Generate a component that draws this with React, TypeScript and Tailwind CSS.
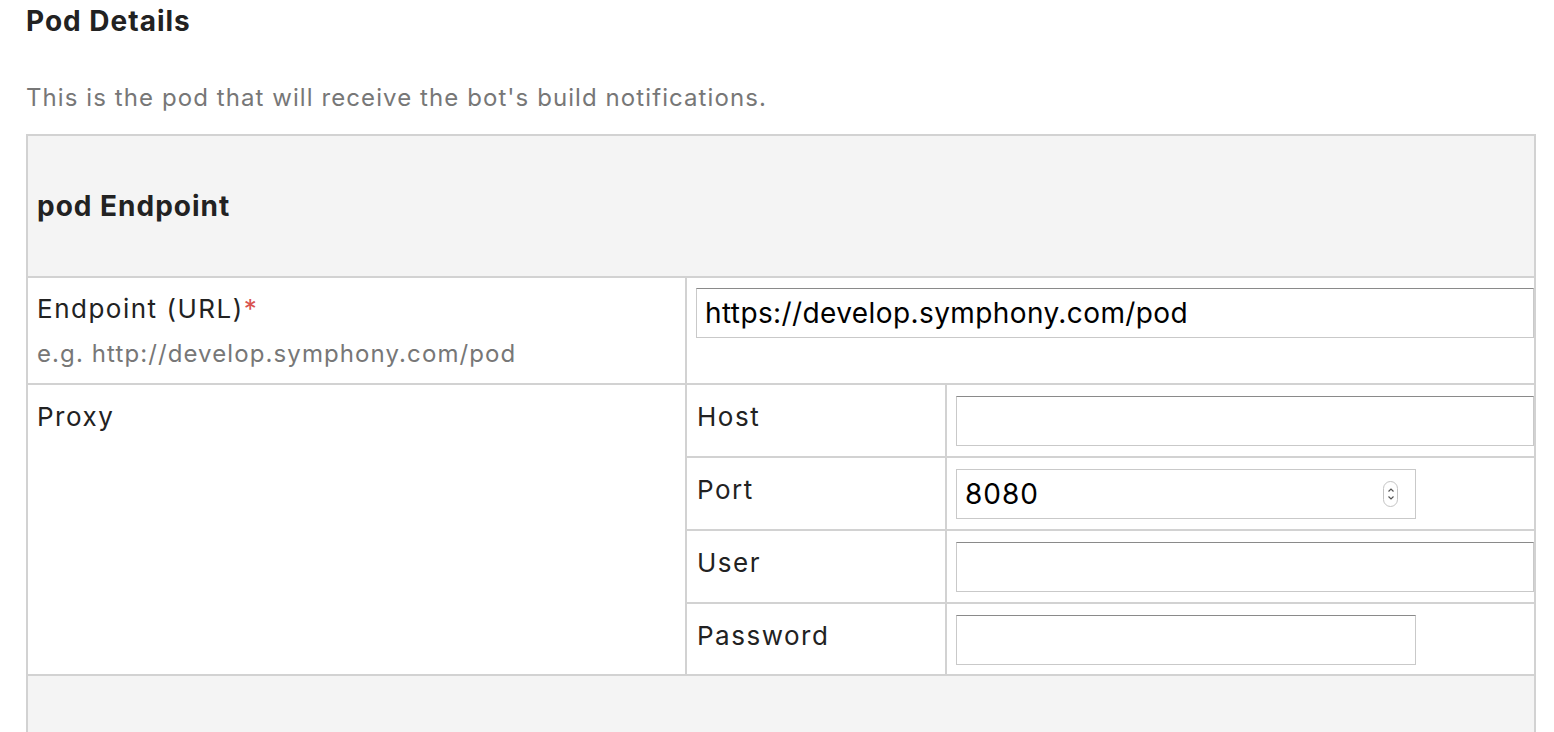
import { useState } from 'react';

// ---------------------------------------------------------------------------
// Small pieces
// ---------------------------------------------------------------------------

const inputCls =
  'h-[50px] border border-[#c9c9c9] border-t-[#8a8a8a] bg-white px-[8px] text-[28px] tracking-[0.4px] text-black outline-none';

function Spinner() {
  return (
    <div className="flex h-[26px] w-[15px] shrink-0 flex-col items-center justify-center rounded-full border border-[#c4c4c4]">
      <svg width="8" height="18" viewBox="0 0 8 18" fill="none" stroke="#555" strokeWidth="1.2">
        <path d="M1.5 6.5 L4 4 L6.5 6.5" />
        <path d="M1.5 11.5 L4 14 L6.5 11.5" />
      </svg>
    </div>
  );
}

function ProxyRow({
  label,
  children,
  last,
}: {
  label: string;
  children: React.ReactNode;
  last?: boolean;
}) {
  return (
    <div className={`flex ${last ? 'h-[70px]' : 'h-[73px] border-b-2 border-[#d2d2d2]'}`}>
      <div className="w-[260px] border-r-2 border-[#d2d2d2] pl-[10px] pt-[12px]">{label}</div>
      <div className="flex-1 pl-[9px] pt-[11px]">{children}</div>
    </div>
  );
}

// ---------------------------------------------------------------------------
// Page
// ---------------------------------------------------------------------------

export default function App() {
  const [endpoint, setEndpoint] = useState('https://develop.symphony.com/pod');
  const [host, setHost] = useState('');
  const [port, setPort] = useState('8080');
  const [user, setUser] = useState('');
  const [password, setPassword] = useState('');

  return (
    <div className="min-h-screen bg-white font-['Inter','Liberation_Sans',sans-serif] text-[#222]">
      <div className="pl-[26px]">
        <h2 className="pt-[4px] text-[28px] font-bold leading-[34px] tracking-[1px]">Pod Details</h2>
        <p className="mt-[44px] text-[24px] leading-[32px] tracking-[1.08px] text-[#777]">
          This is the pod that will receive the bot's build notifications.
        </p>

        <div className="mt-[20px] w-[1510px] border-2 border-[#d2d2d2] text-[26px] tracking-[1.5px]">
          {/* Section header */}
          <div className="flex h-[142px] items-center border-b-2 border-[#d2d2d2] bg-[#f4f4f4] pl-[9px]">
            <span className="text-[28px] font-bold tracking-[1px]">pod Endpoint</span>
          </div>

          {/* Endpoint */}
          <div className="flex h-[107px] border-b-2 border-[#d2d2d2]">
            <div className="w-[659px] border-r-2 border-[#d2d2d2] pl-[9px] pt-[14px]">
              <div className="leading-[34px]">
                Endpoint (URL)<span className="text-[#d9534f]">*</span>
              </div>
              <div className="mt-[13px] text-[24px] leading-[30px] tracking-[1.1px] text-[#777]">
                e.g. http://develop.symphony.com/pod
              </div>
            </div>
            <div className="flex-1 pl-[9px] pt-[10px]">
              <input
                className={`${inputCls} w-full`}
                value={endpoint}
                onChange={(e) => setEndpoint(e.target.value)}
              />
            </div>
          </div>

          {/* Proxy */}
          <div className="flex border-b-2 border-[#d2d2d2]">
            <div className="w-[659px] border-r-2 border-[#d2d2d2] pl-[9px] pt-[12px]">Proxy</div>
            <div className="flex-1">
              <ProxyRow label="Host">
                <input className={`${inputCls} w-full`} value={host} onChange={(e) => setHost(e.target.value)} />
              </ProxyRow>
              <ProxyRow label="Port">
                <div className={`${inputCls} flex w-[460px] items-center justify-between border-t-[#c9c9c9] pr-[17px]`}>
                  <input
                    className="w-full bg-transparent text-[28px] tracking-[1px] outline-none"
                    value={port}
                    onChange={(e) => setPort(e.target.value)}
                  />
                  <Spinner />
                </div>
              </ProxyRow>
              <ProxyRow label="User">
                <input className={`${inputCls} w-full`} value={user} onChange={(e) => setUser(e.target.value)} />
              </ProxyRow>
              <ProxyRow label="Password" last>
                <input
                  type="password"
                  className={`${inputCls} w-[460px]`}
                  value={password}
                  onChange={(e) => setPassword(e.target.value)}
                />
              </ProxyRow>
            </div>
          </div>

          {/* Footer */}
          <div className="h-[80px] bg-[#f4f4f4]" />
        </div>
      </div>
    </div>
  );
}
